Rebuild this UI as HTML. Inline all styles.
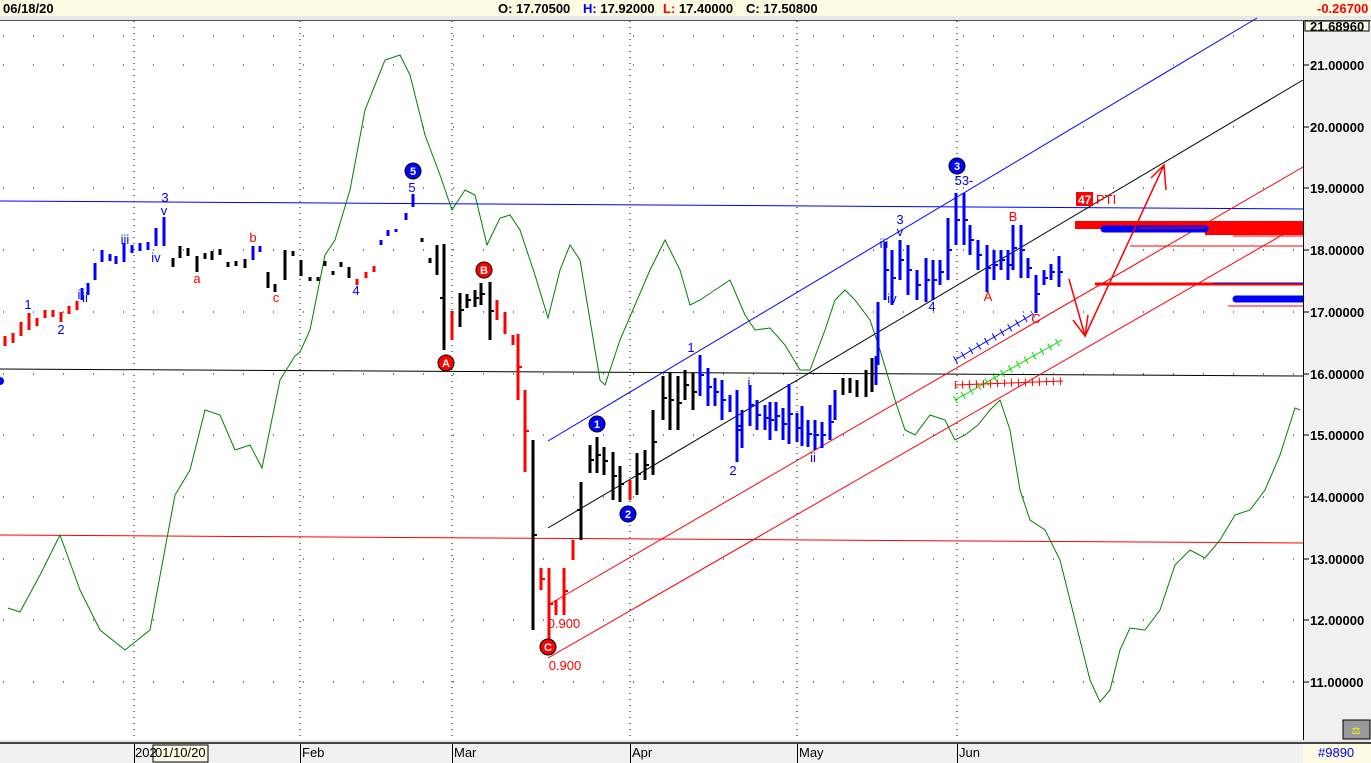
<!DOCTYPE html>
<html><head><meta charset="utf-8"><style>
html,body{margin:0;padding:0;width:1371px;height:763px;overflow:hidden;background:#fff;font-family:"Liberation Sans",sans-serif}
svg{display:block}
</style></head><body>
<svg width="1371" height="763" viewBox="0 0 1371 763" xmlns="http://www.w3.org/2000/svg" font-family="Liberation Sans, sans-serif">
<!-- header -->
<rect x="0" y="0" width="1371" height="16" fill="#fdfbe3"/>
<rect x="0" y="16" width="1371" height="4" fill="#e8e8e8"/>
<line x1="0" y1="20.5" x2="1371" y2="20.5" stroke="#555" stroke-width="1"/>
<text x="3" y="13" font-size="13" font-weight="bold" fill="#000">06/18/20</text>
<text x="498" y="13" font-size="13" font-weight="bold" fill="#000">O: 17.70500</text>
<text x="583" y="13" font-size="13" font-weight="bold" fill="#0000ff">H: <tspan fill="#000">17.92000</tspan></text>
<text x="663" y="13" font-size="13" font-weight="bold" fill="#ff0000">L: <tspan fill="#000">17.40000</tspan></text>
<text x="746" y="13" font-size="13" font-weight="bold" fill="#000">C: 17.50800</text>
<text x="1317" y="13" font-size="13" font-weight="bold" fill="#ff0000">-0.26700</text>

<!-- grid -->
<g stroke="#000" stroke-width="1" stroke-dasharray="1,29" fill="none">
<path d="M3,65H1300M3,127H1300M3,188H1300M3,250H1300M3,312H1300M3,374H1300M3,435H1300M3,497H1300M3,559H1300M3,620H1300M3,682H1300M3,36H1300"/>
</g>
<g stroke="#000" stroke-width="1" stroke-dasharray="1,5" fill="none">
<path d="M134,21V740M300,21V740M452,21V740M630,21V740M797,21V740M957,21V740"/>
</g>

<path d="M0,201L1303,209" stroke="#0000ff" stroke-width="1"/>
<path d="M0,369L1303,376" stroke="#000" stroke-width="1"/>
<path d="M0,535L1303,543" stroke="#ff0000" stroke-width="1"/>

<path d="M548,441L1257,18" stroke="#0000ff" stroke-width="1"/>
<path d="M548,528L1303,80" stroke="#000" stroke-width="1"/>
<path d="M548,605L1303,167" stroke="#ff0000" stroke-width="1"/>
<path d="M548,658L1303,223" stroke="#ff0000" stroke-width="1"/>

<polyline fill="none" stroke="#008000" stroke-width="1" points="8,608 20,612 40,575 60,535 80,590 100,630 125,650 150,630 175,495 190,470 205,410 220,415 235,450 250,445 262,468 280,380 295,356 300,352 310,330 325,255 335,240 350,190 365,110 385,60 400,55 410,75 425,135 440,175 452,210 465,190 475,195 487,245 500,218 510,215 520,230 535,275 548,318 560,270 570,245 580,260 590,320 600,380 605,385 620,340 635,305 650,270 665,240 680,270 690,305 700,300 715,290 730,280 745,315 755,330 770,328 785,345 800,370 810,370 825,330 835,300 845,290 855,300 870,320 880,350 895,400 905,430 915,435 930,415 945,420 955,440 965,435 978,425 990,410 1000,400 1010,430 1020,490 1030,520 1045,530 1060,560 1075,620 1090,680 1100,702 1110,690 1120,650 1130,628 1145,630 1160,610 1175,565 1190,550 1205,558 1220,540 1235,515 1250,510 1265,490 1280,455 1295,408 1300,410"/>

<g fill="none" stroke-width="3">
<path stroke="#ff0000" d="M5,336V346M13,333V343M21,322V336M29,313V330M37,318V326M45,310V318M53,310V317M61,312V322M69,306V314M77,301V310M357,279V285M366,272V278M374,266V272M452,311V340M497,300V320M505,312V334M513,335V345M518,334V400M525,390V472M541,568V590M549,568V640M556,600V615M564,568V615M573,540V560M630,480V500"/>
<path stroke="#0000ff" d="M82,288V300M88,283V295M95,263V280M102,250V262M110,254V261M116,256V264M124,243V262M132,245V253M140,243V251M148,242V250M156,228V246M164,217V246M253,246V260M260,246V252M381,240V245M388,230V236M396,229V232M406,213V220M413,194V207M700,355V396M708,368V406M715,378V406M722,380V420M730,395V412M737,390V462M742,410V448M750,385V426M757,400V430M765,405V430M770,402V440M776,402V431M783,408V440M789,384V444M797,413V442M802,406V446M808,420V447M815,420V450M822,422V448M830,405V440M835,390V420M876,356V385M878,302V365M885,242V300M892,250V305M900,240V280M908,245V295M917,270V300M926,258V302M933,260V300M940,260V285M948,218V280M956,193V245M964,193V245M970,225V255M978,240V270M987,245V292M994,250V280M1001,250V270M1008,250V280M1013,225V270M1021,225V278M1028,258V278M1036,275V313M1044,270V285M1051,264V280M1059,256V287"/>
<path stroke="#000" d="M173,258V267M180,246V258M188,248V256M197,256V272M205,253V259M212,251V260M220,249V255M228,262V267M236,261V266M245,259V268M268,272V288M275,284V292M285,250V280M293,251V256M301,260V276M310,277V281M318,277V281M325,261V266M333,271V275M341,262V267M349,267V278M422,238V242M430,258V263M437,245V275M444,244V350M460,293V327M467,294V308M475,290V307M481,283V305M490,282V340M533,440V630M581,482V540M590,445V473M597,437V473M604,447V475M613,452V500M620,466V502M637,453V495M645,450V480M653,410V475M663,376V420M670,373V430M678,376V430M685,370V400M693,373V410M843,378V395M850,378V393M857,380V397M866,370V397M872,358V392"/>
</g>
<!-- bar ticks -->
<g fill="none" stroke-width="2">
<path stroke="#0000ff" d="M700,375h4M708,387h4M715,392h4M722,400h4M737,426h4M742,430h-4M750,405h4M757,415h4M765,418h4M770,420h4M776,416h4M783,424h4M789,414h4M797,428h4M808,434h4M815,435h4M822,435h4M830,422h4M885,270h4M892,278h4M900,260h4M908,270h4M917,285h4M926,280h4M933,280h4M940,272h4M948,250h4M956,220h4M964,220h4M970,240h4M978,255h4M987,268h4M994,265h4M1001,260h4M1008,265h4M1013,248h4M1021,250h4M1028,268h4M1036,294h4M1044,278h4M1051,272h4M1059,272h4"/>
<path stroke="#000" d="M533,535h4M581,510h-4M590,460h4M597,455h4M604,461h4M613,476h4M620,484h4M637,474h4M645,465h4M653,442h4M663,398h4M670,400h4M678,403h4M685,385h4M693,392h4M444,298h-4M460,310h4M467,300h4M475,298h4M481,294h4M490,311h4"/>
<path stroke="#ff0000" d="M549,604h4M541,579h4M564,591h4M518,367h4M525,431h4"/>
</g>

<g stroke-width="1" fill="none">
<path d="M955,360L1033,314" stroke="#0000ff"/>
<path d="M955,360L1033,314" stroke="#0000ff" stroke-width="8" stroke-dasharray="1,8"/>
<path d="M955,400L1062,340" stroke="#00dd00"/>
<path d="M955,400L1062,340" stroke="#00dd00" stroke-width="8" stroke-dasharray="1,8"/>
<path d="M955,385L1063,381" stroke="#ff0000"/>
<path d="M955,385L1063,381" stroke="#ff0000" stroke-width="8" stroke-dasharray="1,6"/>
</g>

<path d="M1075,225H1303" stroke="#ff0000" stroke-width="8"/>
<path d="M1205,230H1303" stroke="#ff0000" stroke-width="10"/>
<path d="M1104,229H1205" stroke="#0000ff" stroke-width="7" stroke-linecap="round"/>
<path d="M1138,228H1205" stroke="#ff0000" stroke-width="1"/>
<path d="M1233,236H1303M1130,246H1303M1228,306H1303" stroke="#ff0000" stroke-width="1"/>
<path d="M1095,284H1303" stroke="#ff0000" stroke-width="3"/>
<path d="M1213,283H1303" stroke="#0000ff" stroke-width="1"/>
<path d="M1236,299H1303" stroke="#0000ff" stroke-width="7" stroke-linecap="round"/>

<g stroke="#ff0000" stroke-width="1.5" fill="none">
<path d="M1069,279L1085,336M1073,320L1085,336L1088,315"/>
<path d="M1085,336L1164,165M1151,178L1164,165L1166,190"/>
</g>
<rect x="1076" y="192" width="17" height="14" fill="#ff0000"/>
<text x="1078" y="204" font-size="12" font-weight="bold" fill="#fff">47</text>
<text x="1096" y="204" font-size="13" fill="#ff0000">PTI</text>

<g font-size="13" text-anchor="middle">
<g fill="#0000ff">
<text x="28" y="309">1</text><text x="61" y="334">2</text><text x="79" y="299">i</text><text x="85" y="302">ii</text>
<text x="125" y="244">iii</text><text x="156" y="262">iv</text><text x="165" y="202">3</text><text x="164" y="215">v</text>
<text x="356" y="295">4</text><text x="412" y="192">5</text>
<text x="691" y="352">1</text><text x="749" y="387">i</text><text x="733" y="475">2</text><text x="813" y="462">ii</text>
<text x="900" y="224">3</text><text x="900" y="236">v</text><text x="884" y="248">iii</text><text x="892" y="303">iv</text>
<text x="932" y="311">4</text><text x="964" y="185">53-</text>
</g>
<g fill="#ff0000">
<text x="197" y="283">a</text><text x="253" y="242">b</text><text x="276" y="302">c</text>
<text x="988" y="301">A</text><text x="1013" y="221">B</text><text x="1036" y="323">C</text>
<text x="564" y="628">0.900</text><text x="565" y="670">0.900</text>
</g>
</g>

<g font-size="11" font-weight="bold" text-anchor="middle" fill="#fff">
<circle cx="413" cy="171" r="8" fill="#0000ff" stroke="#000"/><text x="413" y="175">5</text>
<circle cx="597" cy="424" r="8" fill="#0000ff" stroke="#000"/><text x="597" y="428">1</text>
<circle cx="628" cy="514" r="8" fill="#0000ff" stroke="#000"/><text x="628" y="518">2</text>
<circle cx="957" cy="166" r="8" fill="#0000ff" stroke="#000"/><text x="957" y="170">3</text>
<circle cx="446" cy="363" r="8" fill="#ff0000" stroke="#000"/><text x="446" y="367">A</text>
<circle cx="484" cy="270" r="8" fill="#ff0000" stroke="#000"/><text x="484" y="274">B</text>
<circle cx="548" cy="647" r="8" fill="#ff0000" stroke="#000"/><text x="548" y="651">C</text>
</g>
<circle cx="0" cy="381" r="4" fill="#0000ff"/>

<rect x="1303" y="21" width="68" height="719" fill="#f0f0f0"/>
<line x1="1303.5" y1="21" x2="1303.5" y2="740" stroke="#000"/>
<rect x="1305" y="21" width="64" height="10" fill="#fdfbe3" stroke="#000"/>
<text x="1310" y="31" font-size="13" font-weight="bold">21.68960</text>
<g font-size="13" font-weight="bold">
<text x="1310" y="70">21.00000</text><text x="1310" y="132">20.00000</text><text x="1310" y="193">19.00000</text>
<text x="1310" y="255">18.00000</text><text x="1310" y="317">17.00000</text><text x="1310" y="379">16.00000</text>
<text x="1310" y="440">15.00000</text><text x="1310" y="502">14.00000</text><text x="1310" y="564">13.00000</text>
<text x="1310" y="625">12.00000</text><text x="1310" y="687">11.00000</text>
</g>
<g stroke="#000"><path d="M1304,65h5M1304,127h5M1304,188h5M1304,250h5M1304,312h5M1304,374h5M1304,435h5M1304,497h5M1304,559h5M1304,620h5M1304,682h5"/></g>
<rect x="1343" y="720" width="27" height="19" fill="#999" stroke="#000"/>
<text x="1356" y="734" font-size="10" text-anchor="middle" fill="#ff0">⚖</text>

<rect x="0" y="740" width="1371" height="4" fill="#e8e8e8"/>
<line x1="0" y1="743" x2="1371" y2="743" stroke="#444" stroke-width="2"/>
<rect x="0" y="744" width="1303" height="19" fill="#f0f0f0"/>
<rect x="1303" y="744" width="68" height="19" fill="#fdfbe3"/>
<g stroke="#000"><path d="M134.5,744V763M300.5,744V763M452.5,744V763M630.5,744V763M797.5,744V763M957.5,744V763"/></g>
<rect x="153" y="745" width="55" height="17" fill="#fdfbe3" stroke="#000"/>
<g font-size="13">
<text x="135" y="757">202</text><text x="155" y="757">01/10/20</text>
<text x="302" y="757">Feb</text><text x="454" y="757">Mar</text><text x="632" y="757">Apr</text>
<text x="799" y="757">May</text><text x="959" y="757">Jun</text>
<text x="1318" y="757" fill="#0000ff">#9890</text>
</g>
</svg>
</body></html>
